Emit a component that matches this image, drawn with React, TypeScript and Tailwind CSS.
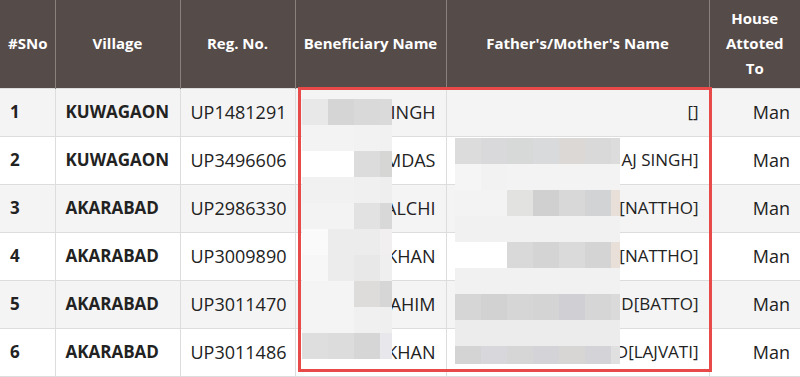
import React from "react";

type Row = {
  sno: string;
  village: string;
  reg: string;
  name: string;
  parent: string;
  house: string;
};

const rows: Row[] = [
  { sno: "1", village: "KUWAGAON", reg: "UP1481291", name: "INGH", parent: "[]", house: "Man" },
  { sno: "2", village: "KUWAGAON", reg: "UP3496606", name: "MDAS", parent: "AJ SINGH]", house: "Man" },
  { sno: "3", village: "AKARABAD", reg: "UP2986330", name: "ALCHI", parent: "[NATTHO]", house: "Man" },
  { sno: "4", village: "AKARABAD", reg: "UP3009890", name: "KHAN", parent: "[NATTHO]", house: "Man" },
  { sno: "5", village: "AKARABAD", reg: "UP3011470", name: "AHIM", parent: "D[BATTO]", house: "Man" },
  { sno: "6", village: "AKARABAD", reg: "UP3011486", name: "KHAN", parent: "D[LAJVATI]", house: "Man" },
];

// pixelated blur over the names
const nameMosaic: string[][] = [
  ["bg-[#e8e8e8]", "bg-[#d5d5d5]", "bg-[#d9d9d9]", "bg-[#dadada]"],
  ["bg-[#f3f3f3]", "bg-[#f3f3f3]", "bg-[#f2f2f2]", "bg-[#f1f1f1]"],
  ["bg-[#ffffff]", "bg-[#ffffff]", "bg-[#dcdcdc]", "bg-[#d6d6d4]"],
  ["bg-[#f1f1f1]", "bg-[#f1f1f1]", "bg-[#f0f0f0]", "bg-[#eeeeee]"],
  ["bg-[#f3f3f3]", "bg-[#f3f3f3]", "bg-[#e2e2e2]", "bg-[#d8d8d8]"],
  ["bg-[#fafafa]", "bg-[#ececec]", "bg-[#ececec]", "bg-[#f1eff0]"],
  ["bg-[#f7f7f7]", "bg-[#ececec]", "bg-[#e8e8e8]", "bg-[#efefef]"],
  ["bg-[#f4f4f4]", "bg-[#f4f4f4]", "bg-[#dedcdb]", "bg-[#d6d6d6]"],
  ["bg-[#f4f4f4]", "bg-[#f4f4f4]", "bg-[#f0f0f0]", "bg-[#efefef]"],
  ["bg-[#dedede]", "bg-[#dcdcdc]", "bg-[#d6d6d6]", "bg-[#e8e8ec]"],
];

const parentMosaic: string[][] = [
  ["bg-[#dcdcdc]", "bg-[#d9d9db]", "bg-[#d7d8d8]", "bg-[#d9dadc]", "bg-[#dcd8d6]", "bg-[#d9d9d9]", "bg-[#dcdcdc]"],
  ["bg-[#f5f5f5]", "bg-[#f2f2f2]", "bg-[#f3f3f3]", "bg-[#f3f3f3]", "bg-[#f3f3f3]", "bg-[#f3f3f3]", "bg-[#f3f3f3]"],
  ["bg-[#f3f3f3]", "bg-[#f3f3f3]", "bg-[#e2e2e0]", "bg-[#d0d0d0]", "bg-[#d8d8d8]", "bg-[#d2d3d5]", "bg-[#e8e0d8]"],
  ["bg-[#f1f1f1]", "bg-[#f1f1f1]", "bg-[#f1f1f1]", "bg-[#f1f1f1]", "bg-[#f1f1f1]", "bg-[#f1f1f1]", "bg-[#f1f1f1]"],
  ["bg-[#ffffff]", "bg-[#ffffff]", "bg-[#d9d9d9]", "bg-[#d4d4d4]", "bg-[#dadada]", "bg-[#d4d4d4]", "bg-[#e8e0d8]"],
  ["bg-[#f1f1f1]", "bg-[#f1f1f1]", "bg-[#f1f1f1]", "bg-[#f1f1f1]", "bg-[#f1f1f1]", "bg-[#f1f1f1]", "bg-[#f1f1f1]"],
  ["bg-[#d6d6d6]", "bg-[#d2d2d2]", "bg-[#d6d6d6]", "bg-[#d4d4d4]", "bg-[#d0d0d4]", "bg-[#d6d6d6]", "bg-[#dadada]"],
  ["bg-[#ececec]", "bg-[#ececec]", "bg-[#ececec]", "bg-[#ececec]", "bg-[#ececec]", "bg-[#ececec]", "bg-[#ececec]"],
  ["bg-[#d4d4d4]", "bg-[#d8d8dc]", "bg-[#d6d6d6]", "bg-[#d4d4d8]", "bg-[#d8d6d4]", "bg-[#d4d4d8]", "bg-[#e0e0e0]"],
];

function Mosaic({
  grid,
  className,
  lastW,
  lastRowH,
}: {
  grid: string[][];
  className: string;
  lastW: string;
  lastRowH: string;
}) {
  return (
    <div className={`absolute flex flex-col ${className}`}>
      {grid.map((r, i) => (
        <div key={i} className={`flex ${i === grid.length - 1 ? lastRowH : "h-[26px]"}`}>
          {r.map((c, j) => (
            <div key={j} className={`${c} ${j === r.length - 1 ? lastW : "w-[26px]"}`} />
          ))}
        </div>
      ))}
    </div>
  );
}

export default function App() {
  const th = "border-x border-[#8a807c] px-2 font-bold text-white text-[15px] leading-[25px] text-center";
  const td = "border border-[#dddddd] px-[10px] h-[48px]";

  return (
    <div className="relative w-[800px] h-[377px] overflow-hidden bg-white font-['Open_Sans',sans-serif] text-[#222]">
      <table className="w-[800px] table-fixed border-collapse">
        <colgroup>
          <col className="w-[55px]" />
          <col className="w-[125px]" />
          <col className="w-[115px]" />
          <col className="w-[151px]" />
          <col className="w-[263px]" />
          <col className="w-[91px]" />
        </colgroup>
        <thead>
          <tr className="bg-[#554b48] h-[88px]">
            <th className={`${th} border-l-0`}>#SNo</th>
            <th className={th}>Village</th>
            <th className={th}>Reg. No.</th>
            <th className={th}>Beneficiary Name</th>
            <th className={th}>Father's/Mother's Name</th>
            <th className={`${th} border-r-0`}>House Attoted To</th>
          </tr>
        </thead>
        <tbody className="text-[18px]">
          {rows.map((r, i) => (
            <tr key={r.sno} className={i % 2 === 0 ? "bg-[#f4f4f4]" : "bg-white"}>
              <td className={`${td} border-l-0 font-bold text-[17px]`}>{r.sno}</td>
              <td className={`${td} font-bold text-[17px]`}>{r.village}</td>
              <td className={td}>{r.reg}</td>
              <td className={`${td} text-right`}>{r.name}</td>
              <td className={`${td} text-right text-[17px]`}>{r.parent}</td>
              <td className={`${td} border-r-0 text-right`}>{r.house}</td>
            </tr>
          ))}
        </tbody>
      </table>

      <Mosaic grid={nameMosaic} className="left-[302px] top-[99px]" lastW="w-[12px]" lastRowH="h-[26px]" />
      <Mosaic grid={parentMosaic} className="left-[455px] top-[138px]" lastW="w-[9px]" lastRowH="h-[18px]" />

      <div className="absolute left-[298px] top-[87px] w-[414px] h-[285px] border-[3px] border-[#e84a4a]" />
    </div>
  );
}
